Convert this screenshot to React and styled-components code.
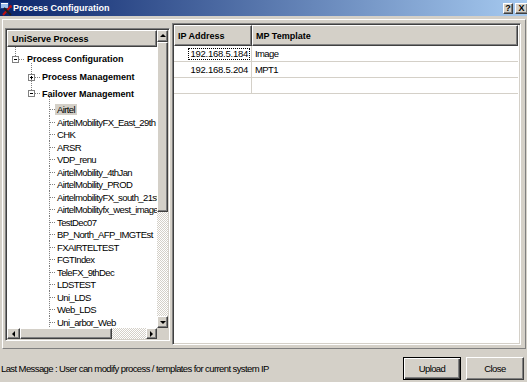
import React from "react";
import styled, { createGlobalStyle, css } from "styled-components";

const GlobalStyle = createGlobalStyle`
  html, body { margin: 0; padding: 0; }
  body {
    width: 527px;
    height: 382px;
    overflow: hidden;
    background: #d4d0c8;
    font-family: "Liberation Sans", Arial, sans-serif;
    font-size: 9px;
    color: #000;
  }
  * { box-sizing: border-box; }
`;

// regular (non bold) text in this dialog is tall but narrow
const plainText = css`
  font-size: 9.5px;
  letter-spacing: -0.6px;
`;

const raised = css`
  border: 1px solid;
  border-color: #fff #404040 #404040 #fff;
  box-shadow: inset -1px -1px 0 #808080;
  background: #d4d0c8;
`;

const sunken = css`
  border: 1px solid;
  border-color: #808080 #fff #fff #808080;
  padding: 1px;
  box-shadow: inset 1px 1px 0 #404040, inset -1px -1px 0 #d4d0c8;
`;

const Window = styled.div`
  display: flex;
  flex-direction: column;
  width: 527px;
  height: 382px;
`;

const TitleBar = styled.div`
  flex: none;
  height: 16px;
  display: flex;
  align-items: center;
  background: linear-gradient(to right, #0a246a, #a6caf0);
`;

const TitleText = styled.span`
  flex: 1;
  color: #fff;
  font-weight: bold;
  font-size: 9px;
  white-space: nowrap;
`;

const CaptionButton = styled.div`
  ${raised};
  width: ${(p) => p.$w}px;
  height: 11px;
  margin-right: ${(p) => p.$mr}px;
  display: flex;
  align-items: center;
  justify-content: center;
  font-weight: bold;
  font-size: 9px;
  line-height: 1;
`;

const Frame = styled.div`
  flex: none;
  margin: 3px 1px 0 2px;
  border: 1px solid;
  border-color: #fff #808080 #808080 #fff;
  padding: 3px 4px 3px 2px;
  display: flex;
  align-items: flex-start;
  gap: 2px;
`;

const LeftPanel = styled.div`
  ${sunken};
  flex: none;
  width: 165px;
  height: 313px;
  margin-top: 5px;
  display: flex;
  flex-direction: column;
  background: #d4d0c8;
`;

const ScrollBody = styled.div`
  display: flex;
  height: 298px;
`;

const Viewport = styled.div`
  flex: 1;
  overflow: hidden;
  background: #fff;
`;

const PanelHeader = styled.div`
  ${raised};
  height: 17px;
  display: flex;
  align-items: center;
  padding-left: 4px;
  font-weight: bold;
  white-space: nowrap;
`;

const Tree = styled.div`
  padding-top: 2px;
`;

const Row = styled.div`
  display: flex;
  align-items: center;
  height: ${(p) => p.$h}px;
  white-space: nowrap;
`;

const Gutter = styled.svg`
  flex: none;
  overflow: visible;
`;

const Label = styled.span`
  padding: 0 2px;
  line-height: 11px;
  background: ${(p) => (p.$selected ? "#d4d0c8" : "transparent")};
  ${(p) =>
    p.$bold
      ? css`
          font-weight: bold;
        `
      : plainText}
`;

const VScroll = styled.div`
  flex: none;
  width: 11px;
  display: flex;
  flex-direction: column;
`;

const ScrollButton = styled.div`
  ${raised};
  flex: none;
  width: ${(p) => p.$w || 11}px;
  height: ${(p) => p.$h || 11}px;
  display: flex;
  align-items: center;
  justify-content: center;
`;

const Thumb = styled.div`
  ${raised};
  flex: none;
  width: ${(p) => (p.$w ? `${p.$w}px` : "auto")};
  height: ${(p) => (p.$h ? `${p.$h}px` : "auto")};
`;

const Track = styled.div`
  flex: 1;
  background: repeating-conic-gradient(#d4d0c8 0% 25%, #ffffff 0% 50%) 0 0 / 2px 2px;
`;

const Arrow = styled.span`
  width: 0;
  height: 0;
  border: 3px solid transparent;
  ${(p) =>
    p.$dir === "up" &&
    css`
      border-bottom-color: #000;
      border-top-width: 0;
      margin-top: -1px;
    `}
  ${(p) =>
    p.$dir === "down" &&
    css`
      border-top-color: #000;
      border-bottom-width: 0;
    `}
  ${(p) =>
    p.$dir === "left" &&
    css`
      border-right-color: #000;
      border-left-width: 0;
    `}
  ${(p) =>
    p.$dir === "right" &&
    css`
      border-left-color: #000;
      border-right-width: 0;
    `}
`;

const HScrollRow = styled.div`
  display: flex;
  height: 11px;
`;

const HScroll = styled.div`
  flex: 1;
  display: flex;
`;

const Corner = styled.div`
  flex: none;
  width: 11px;
  background: #d4d0c8;
`;

const RightPanel = styled.div`
  ${sunken};
  flex: 1;
  height: 322px;
  background: #fff;
  display: flex;
  flex-direction: column;
`;

const HeaderRow = styled.div`
  display: flex;
  height: 21px;
  flex: none;
`;

const HeaderCell = styled.div`
  ${raised};
  flex: none;
  width: ${(p) => p.$w}px;
  display: flex;
  align-items: center;
  padding-left: 3px;
  font-weight: bold;
`;

const DataRow = styled.div`
  display: flex;
  height: 16px;
  width: 344px;
  border-bottom: 1px solid #d4d0c8;
`;

const Cell = styled.div`
  flex: none;
  width: ${(p) => p.$w}px;
  display: flex;
  align-items: center;
  justify-content: ${(p) => (p.$right ? "flex-end" : "flex-start")};
  padding: ${(p) => (p.$right ? "0 1px 0 0" : "0 0 0 1px")};
  border-right: ${(p) => (p.$divider ? "1px solid #d4d0c8" : "0")};
  white-space: nowrap;
`;

const CellText = styled.span`
  padding: 0 1px;
  line-height: 10px;
  border: 1px dotted ${(p) => (p.$focus ? "#000" : "transparent")};
  font-size: 9.5px;
  letter-spacing: ${(p) => (p.$digits ? "-0.25px" : "-0.6px")};
`;

const StatusBar = styled.div`
  flex: 1;
  display: flex;
  align-items: center;
  padding-top: 5px;
`;

const Message = styled.span`
  ${plainText};
  flex: 1;
  padding-left: 1px;
  white-space: nowrap;
`;

const PushButton = styled.div`
  ${plainText};
  flex: none;
  width: 58px;
  height: 23px;
  margin-right: ${(p) => p.$mr}px;
  display: flex;
  align-items: center;
  justify-content: center;
  background: #d4d0c8;
  border: 1px solid;
  ${(p) =>
    p.$default
      ? css`
          border-color: #000;
          box-shadow: inset 1px 1px 0 #fff, inset -1px -1px 0 #404040, inset -2px -2px 0 #808080;
        `
      : css`
          border-color: #fff #404040 #404040 #fff;
          box-shadow: inset -1px -1px 0 #808080;
        `}
`;

const children = [
  "Airtel",
  "AirtelMobilityFX_East_29th",
  "CHK",
  "ARSR",
  "VDP_renu",
  "AirtelMobility_4thJan",
  "AirtelMobility_PROD",
  "AirtelmobilityFX_south_21st",
  "AirtelMobilityfx_west_image",
  "TestDec07",
  "BP_North_AFP_IMGTEst",
  "FXAIRTELTEST",
  "FGTIndex",
  "TeleFX_9thDec",
  "LDSTEST",
  "Uni_LDS",
  "Web_LDS",
  "Uni_arbor_Web",
];

const rows = [
  ["192.168.5.184", "Image"],
  ["192.168.5.204", "MPT1"],
  ["", ""],
];

const Dots = ({ x1, y1, x2, y2 }) => (
  <line x1={x1} y1={y1} x2={x2} y2={y2} stroke="#808080" strokeDasharray="1 1" />
);

const Expander = ({ cx, cy, open }) => (
  <g>
    <rect x={cx - 3} y={cy - 3} width="6" height="6" fill="#fff" stroke="#808080" />
    <line x1={cx - 1.5} y1={cy} x2={cx + 1.5} y2={cy} stroke="#000" />
    {!open && <line x1={cx} y1={cy - 1.5} x2={cx} y2={cy + 1.5} stroke="#000" />}
  </g>
);

const AppIcon = () => (
  <svg width="13" height="15" viewBox="0 0 13 15">
    <rect x="0.5" y="1.5" width="8" height="6" fill="#9ec0ec" stroke="#1d3f8a" />
    <rect x="1" y="2" width="7" height="1" fill="#fff" />
    <path d="M3 14 L10 6" stroke="#c01010" strokeWidth="2" />
    <path d="M4 7 L11 14" stroke="#202020" strokeWidth="2" />
    <circle cx="10.5" cy="5.5" r="1.5" fill="#c01010" />
  </svg>
);

// gutter x values are relative to the tree viewport
const RootRow = () => (
  <Row $h={20}>
    <Gutter width="18" height="20">
      <Dots x1={8.5} y1={-2} x2={8.5} y2={7.5} />
      <Expander cx={8.5} cy={10.5} open />
      <Dots x1={12} y1={10.5} x2={18} y2={10.5} />
    </Gutter>
    <Label $bold>Process Configuration</Label>
  </Row>
);

const BranchRow = ({ h, text, open }) => (
  <Row $h={h}>
    <Gutter width="33" height={h}>
      <Dots x1={24.5} y1={-6} x2={24.5} y2={5.5} />
      <Expander cx={24.5} cy={8.5} open={open} />
      <Dots x1={28} y1={8.5} x2={33} y2={8.5} />
    </Gutter>
    <Label $bold>{text}</Label>
  </Row>
);

const LeafRow = ({ h, text, first, selected }) => (
  <Row $h={h}>
    <Gutter width="48" height={h}>
      <Dots x1={42.5} y1={first ? -6 : 0} x2={42.5} y2={h} />
      <Dots x1={43} y1={6.5} x2={49} y2={6.5} />
    </Gutter>
    <Label $selected={selected}>{text}</Label>
  </Row>
);

export default function App() {
  return (
    <Window>
      <GlobalStyle />
      <TitleBar>
        <AppIcon />
        <TitleText>Process Configuration</TitleText>
        <CaptionButton $w={10} $mr={2}>?</CaptionButton>
        <CaptionButton $w={13} $mr={-1}>X</CaptionButton>
      </TitleBar>

      <Frame>
        <LeftPanel>
          <ScrollBody>
            <Viewport>
              <PanelHeader>UniServe Process</PanelHeader>
              <Tree>
                <RootRow />
                <BranchRow h={16} text="Process Management" />
                <BranchRow h={18} text="Failover Management" open />
                {children.map((name, i) => (
                  <LeafRow
                    key={name}
                    h={i % 2 === 0 ? 13 : 12}
                    text={name}
                    first={i === 0}
                    selected={i === 0}
                  />
                ))}
              </Tree>
            </Viewport>
            <VScroll>
              <ScrollButton $h={12}>
                <Arrow $dir="up" />
              </ScrollButton>
              <Thumb $h={170} />
              <Track />
              <ScrollButton $h={12}>
                <Arrow $dir="down" />
              </ScrollButton>
            </VScroll>
          </ScrollBody>
          <HScrollRow>
            <HScroll>
              <ScrollButton $w={13}>
                <Arrow $dir="left" />
              </ScrollButton>
              <Thumb $w={92} />
              <Track />
              <ScrollButton>
                <Arrow $dir="right" />
              </ScrollButton>
            </HScroll>
            <Corner />
          </HScrollRow>
        </LeftPanel>

        <RightPanel>
          <HeaderRow>
            <HeaderCell $w={78}>IP Address</HeaderCell>
            <HeaderCell $w={266}>MP Template</HeaderCell>
          </HeaderRow>
          {rows.map(([ip, tpl], i) => (
            <DataRow key={i}>
              <Cell $w={78} $right $divider>
                {ip && (
                  <CellText $digits $focus={i === 0}>
                    {ip}
                  </CellText>
                )}
              </Cell>
              <Cell $w={266}>{tpl && <CellText>{tpl}</CellText>}</Cell>
            </DataRow>
          ))}
        </RightPanel>
      </Frame>

      <StatusBar>
        <Message>Last Message : User can modify process / templates for current system IP</Message>
        <PushButton $default $mr={5}>Upload</PushButton>
        <PushButton $mr={3}>Close</PushButton>
      </StatusBar>
    </Window>
  );
}
